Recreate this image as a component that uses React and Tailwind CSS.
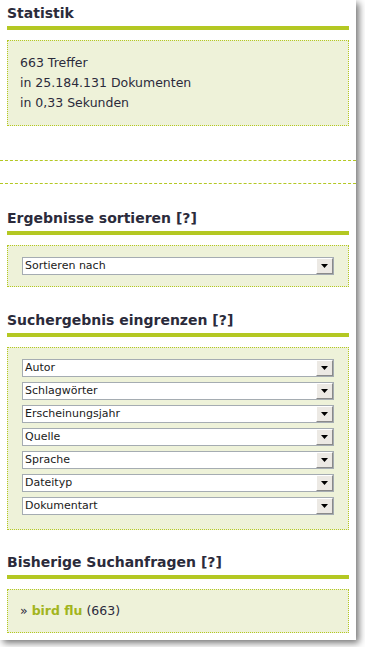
import React from 'react';

const font = { fontFamily: '"DejaVu Sans", Verdana, sans-serif' };

function Heading({ children }) {
    return (
        <div>
            <h2 className="text-[14px] leading-[18px] font-bold text-[#2b2b3b] px-[7px]">{children}</h2>
            <div className="mt-[4px] mx-[7px] h-[4px] bg-[#b4c823]" />
        </div>
    );
}

function Box({ children, className = '' }) {
    return (
        <div className={`mx-[7px] mt-[10px] border border-dotted border-[#b4c823] bg-[#eef2d9] ${className}`}>
            {children}
        </div>
    );
}

function Select({ label }) {
    return (
        <div className="flex h-[18px] border border-[#a5acb2] bg-white">
            <div className="flex-1 text-[11px] leading-[16px] pl-[2px] text-[#1a1a1a] truncate">{label}</div>
            <div className="w-[17px] h-[16px] bg-[#ece9e4] border-t border-l border-t-white border-l-white border-r border-b border-r-[#8a8a8a] border-b-[#8a8a8a] flex items-center justify-center">
                <svg width="7" height="4" viewBox="0 0 7 4">
                    <path d="M0 0h7L3.5 4z" fill="#000" />
                </svg>
            </div>
        </div>
    );
}

export default function App() {
    const filters = ['Autor', 'Schlagwörter', 'Erscheinungsjahr', 'Quelle', 'Sprache', 'Dateityp', 'Dokumentart'];

    return (
        <div className="min-h-screen bg-white" style={font}>
            <div className="w-[356px] bg-white pt-[4px] pb-[7px] shadow-[3px_3px_7px_rgba(0,0,0,0.55)]">

                <Heading>Statistik</Heading>
                <Box className="px-[12px] pt-[12px] pb-[12px] text-[12.5px] leading-[20px] text-[#2b2b3b]">
                    <div>663 Treffer</div>
                    <div>in 25.184.131 Dokumenten</div>
                    <div>in 0,33 Sekunden</div>
                </Box>

                <div className="mt-[34px] border-t border-dashed border-[#b4c823]" />
                <div className="mt-[22px] border-t border-dashed border-[#b4c823]" />

                <div className="mt-[25px]">
                    <Heading>Ergebnisse sortieren [?]</Heading>
                </div>
                <Box className="px-[14px] pt-[11px] pb-[11px]">
                    <Select label="Sortieren nach" />
                </Box>

                <div className="mt-[24px]">
                    <Heading>Suchergebnis eingrenzen [?]</Heading>
                </div>
                <Box className="px-[14px] pt-[11px] pb-[14px] flex flex-col gap-[5px]">
                    {filters.map((f) => (
                        <Select key={f} label={f} />
                    ))}
                </Box>

                <div className="mt-[23px]">
                    <Heading>Bisherige Suchanfragen [?]</Heading>
                </div>
                <Box className="px-[12px] pt-[11px] pb-[11px] text-[12.5px] leading-[20px] text-[#2b2b3b]">
                    <span>» </span>
                    <a href="#" className="font-bold text-[#a2b51d]">bird flu</a>
                    <span> (663)</span>
                </Box>

            </div>
        </div>
    );
}
